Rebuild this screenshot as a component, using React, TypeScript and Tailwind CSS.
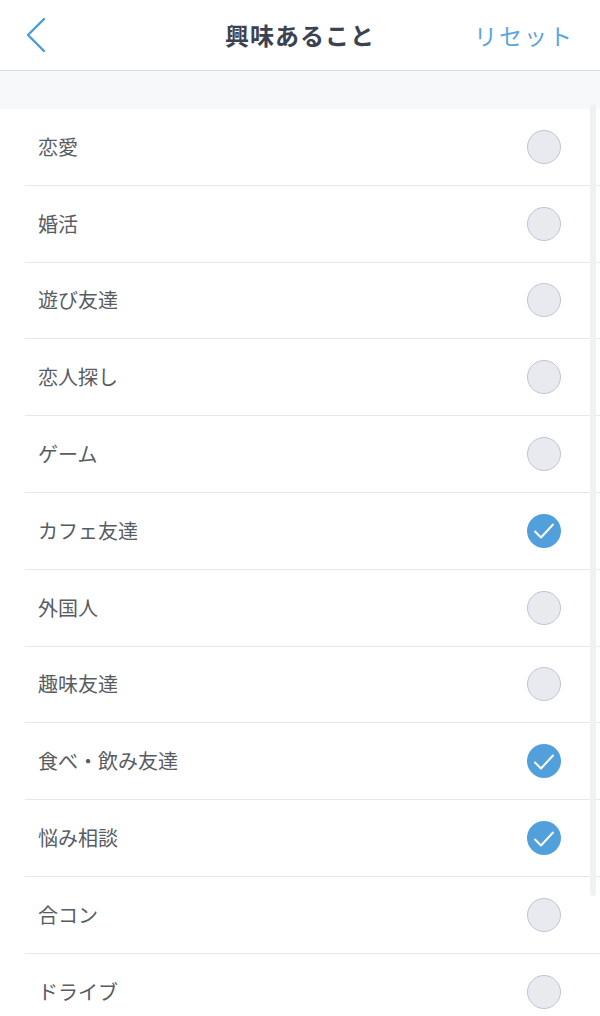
import React from "react";

const items: { label: string; checked: boolean }[] = [
  { label: "恋愛", checked: false },
  { label: "婚活", checked: false },
  { label: "遊び友達", checked: false },
  { label: "恋人探し", checked: false },
  { label: "ゲーム", checked: false },
  { label: "カフェ友達", checked: true },
  { label: "外国人", checked: false },
  { label: "趣味友達", checked: false },
  { label: "食べ・飲み友達", checked: true },
  { label: "悩み相談", checked: true },
  { label: "合コン", checked: false },
  { label: "ドライブ", checked: false },
];

const font = { fontFamily: '"Noto Sans CJK JP", "Noto Sans", sans-serif' };

function Check({ checked }: { checked: boolean }) {
  if (checked) {
    return (
      <div className="w-[34px] h-[34px] rounded-full bg-[#519fdb] flex items-center justify-center">
        <svg width="22" height="18" viewBox="0 0 22 18" fill="none" className="mt-[1px]">
          <path d="M2 9.5 L8 15.5 L20 2.5" stroke="white" strokeWidth="2" strokeLinecap="round" strokeLinejoin="round" />
        </svg>
      </div>
    );
  }
  return <div className="w-[34px] h-[34px] rounded-full bg-[#e9eaef] border-[1.5px] border-[#bfc5d5]" />;
}

export default function App() {
  return (
    <div className="relative w-[600px] h-[1016px] overflow-hidden bg-white" style={font}>
      <div className="h-[71px] flex items-center justify-between border-b border-[#dcdde0] px-[24px]">
        <svg width="22" height="36" viewBox="0 0 22 36" fill="none" className="ml-[1px]">
          <path d="M19 2 L3 18 L19 34" stroke="#4b9bd9" strokeWidth="2.4" strokeLinecap="round" strokeLinejoin="round" />
        </svg>
        <div className="absolute left-0 right-0 top-0 h-[70px] flex items-center justify-center pointer-events-none">
          <span className="text-[24px] font-bold text-[#3b4252] tracking-[1px]">興味あること</span>
        </div>
        <span className="text-[23px] text-[#5aa5de] tracking-[2px] mr-[2px]">リセット</span>
      </div>
      <div className="h-[38px] bg-[#f7f8fa]" />
      <div className="flex flex-col">
        {items.map((it) => (
          <div key={it.label} className="h-[76.8px] ml-[25px] border-b border-[#e6e7ea] flex items-center justify-between pl-[13px] pr-[39px]">
            <span className="text-[20px] text-[#575c62]">{it.label}</span>
            <Check checked={it.checked} />
          </div>
        ))}
      </div>
      <div className="absolute left-[590px] top-[104px] w-[6px] h-[792px] rounded-full bg-[#f0f1f3]" />
    </div>
  );
}
